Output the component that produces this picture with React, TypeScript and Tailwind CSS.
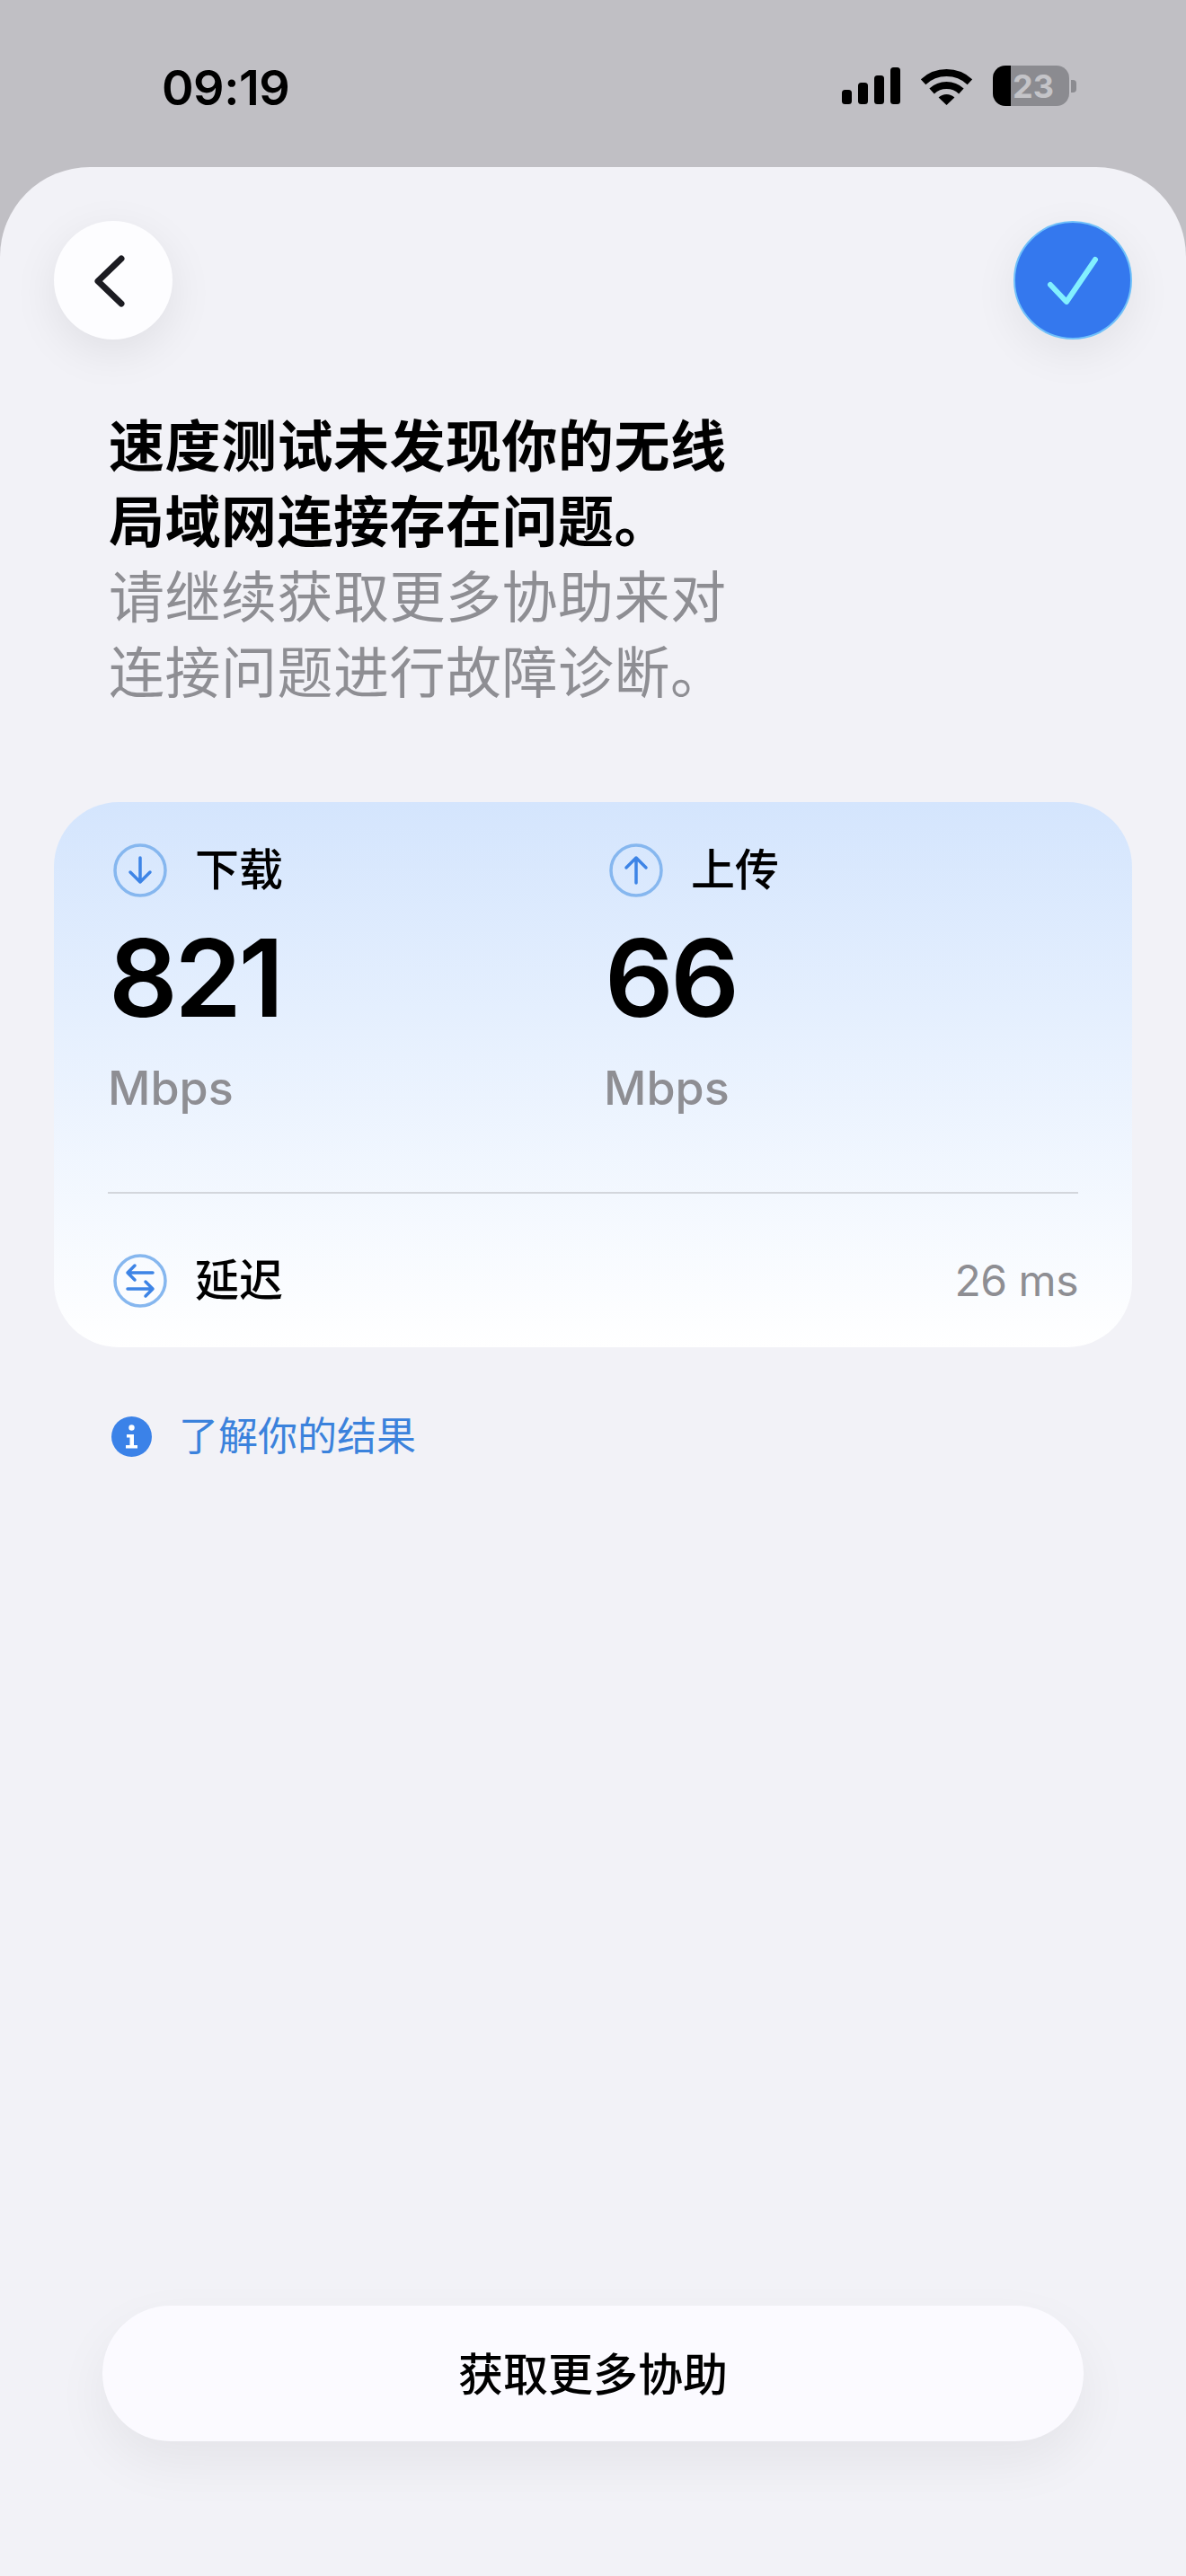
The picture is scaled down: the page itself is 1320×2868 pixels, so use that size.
import React from 'react';

const fontStack = 'font-[Inter,"Noto_Sans_CJK_SC",sans-serif]';

const SignalIcon = () => (
    <svg width="65" height="41" viewBox="0 0 65 41" fill="#000">
        <rect x="0" y="25" width="11" height="16" rx="3.5" />
        <rect x="18" y="17" width="11" height="24" rx="3.5" />
        <rect x="36" y="9" width="11" height="32" rx="3.5" />
        <rect x="54" y="0" width="11" height="41" rx="3.5" />
    </svg>
);

const WifiIcon = () => (
    <svg width="57" height="42" viewBox="0 0 57 42" fill="none">
        <path d="M2.6 16.2A38 38 0 0 1 54.4 16.2" stroke="#000" strokeWidth="8" />
        <path d="M12.1 26.5A24 24 0 0 1 44.9 26.5" stroke="#000" strokeWidth="8" />
        <path d="M28.5 42L19.6 33.5A13 13 0 0 1 37.4 33.5Z" fill="#000" />
    </svg>
);

const Battery = () => (
    <div className="flex items-center gap-[2px]">
        <div className="w-[85px] h-[45px] rounded-[14px] flex items-center justify-end pr-[17px] bg-[linear-gradient(90deg,#000_0,#000_20px,#8b8b90_20px,#8b8b90_100%)] text-[#c4c4c8] text-[36px] leading-none font-bold font-[Inter,sans-serif]">
            23
        </div>
        <div className="w-[6px] h-[14px] rounded-r-[4px] bg-[#8b8b90]" />
    </div>
);

const RoundIcon = ({ children }: { children: React.ReactNode }) => (
    <svg width="60" height="60" viewBox="0 0 60 60" fill="none" className="shrink-0">
        <circle cx="30" cy="30" r="28" stroke="#86b7ef" strokeWidth="3.5" />
        <g stroke="#3d84e6" strokeWidth="3.5" strokeLinecap="round" strokeLinejoin="round">{children}</g>
    </svg>
);

const Metric = ({ icon, label, value }: { icon: React.ReactNode; label: string; value: string }) => (
    <div>
        <div className="flex items-center gap-[31px]">
            <RoundIcon>{icon}</RoundIcon>
            <span className="text-[49px] leading-[60px] font-medium text-black">{label}</span>
        </div>
        <div className="mt-[30px] -ml-[5px] text-[120px] leading-[120px] font-semibold text-black tracking-[-3.5px]">{value}</div>
        <div className="mt-[33px] -ml-[6px] text-[52px] leading-[60px] font-medium text-[#8e8e93]">Mbps</div>
    </div>
);

const App: React.FC = () => {
    return (
        <div className={`w-[1320px] h-[2868px] bg-[#c0bfc4] flex flex-col overflow-hidden ${fontStack}`}>
            {/* Status bar */}
            <div className="h-[186px] shrink-0 flex items-start justify-between pl-[180px] pr-[122px] pt-[73px]">
                <span className="text-[54px] leading-[50px] font-semibold text-black tracking-[-0.5px]">09:19</span>
                <div className="flex items-center gap-[23px]">
                    <SignalIcon />
                    <WifiIcon />
                    <Battery />
                </div>
            </div>

            {/* Sheet */}
            <div className="flex-1 bg-[#f2f2f7] rounded-t-[100px] flex flex-col">
                <div className="flex justify-between px-[60px] pt-[60px]">
                    <button className="w-[132px] h-[132px] rounded-full bg-[#fdfdff] shadow-[0_14px_50px_rgba(0,0,0,0.08)]">
                        <svg viewBox="0 0 132 132" fill="none" className="w-full h-full">
                            <path d="M75 42L49 67L75 92" stroke="#1c1c22" strokeWidth="7" strokeLinecap="round" strokeLinejoin="round" />
                        </svg>
                    </button>
                    <button className="w-[132px] h-[132px] rounded-full bg-[#3478ee] border-[2px] border-[#6fc0fa] shadow-[0_14px_50px_rgba(0,0,0,0.07)]">
                        <svg viewBox="0 0 128 128" fill="none" className="w-full h-full">
                            <path d="M39 69L57 88L89 41" stroke="#82f0ff" strokeWidth="6" strokeLinecap="round" strokeLinejoin="round" />
                        </svg>
                    </button>
                </div>

                <h1 className="mt-[78px] pl-[121px] text-[62px] leading-[84px] font-normal tracking-[0.5px]">
                    <span className="block font-bold text-black">
                        速度测试未发现你的无线<br />局域网连接存在问题。
                    </span>
                    <span className="block text-[#8e8e93]">
                        请继续获取更多协助来对<br />连接问题进行故障诊断。
                    </span>
                </h1>

                {/* Results card */}
                <div className="mt-[101px] mx-[60px] rounded-[72px] bg-gradient-to-b from-[#d4e5fd] to-[#ffffff] pt-[46px] pb-[47px] px-[66px] h-[607px]">
                    <div className="grid grid-cols-[552px_1fr]">
                        <Metric
                            label="下载"
                            value="821"
                            icon={<path d="M30 16V43M19 32L30 43L41 32" />}
                        />
                        <Metric
                            label="上传"
                            value="66"
                            icon={<path d="M30 44V16M19 27L30 16L41 27" />}
                        />
                    </div>
                    <div className="mt-[85px] -mr-[6px] -ml-[6px] border-t-2 border-[#d3d6dc]" />
                    <div className="mt-[67px] flex items-center justify-between">
                        <div className="flex items-center gap-[31px]">
                            <RoundIcon>
                                <path d="M44 21H16M24 13L16 21L24 29M16 39H44M36 31L44 39L36 47" />
                            </RoundIcon>
                            <span className="text-[49px] leading-[60px] font-medium text-black">延迟</span>
                        </div>
                        <span className="-mr-[6px] text-[48px] leading-[58px] tracking-[-0.5px] text-[#8e8e93]">26 ms</span>
                    </div>
                </div>

                <div className="mt-[77px] pl-[124px] flex items-center gap-[30px]">
                    <svg width="45" height="45" viewBox="0 0 45 45" className="shrink-0">
                        <circle cx="22.5" cy="22.5" r="22.5" fill="#3b82e8" />
                        <circle cx="22.5" cy="12.5" r="3.2" fill="#fff" />
                        <path d="M17 20H25V32H29V35.5H16V32H20.5V23.5H17Z" fill="#fff" />
                    </svg>
                    <span className="text-[44px] leading-[45px] text-[#3b82dc]">了解你的结果</span>
                </div>

                <div className="mt-auto mb-[150px] mx-[114px]">
                    <button className="w-full h-[151px] pt-[4px] rounded-full bg-[#fbfaff] shadow-[0_24px_60px_rgba(0,0,0,0.06)] text-[50px] font-medium text-black">
                        获取更多协助
                    </button>
                </div>
            </div>
        </div>
    );
};

export default App;
